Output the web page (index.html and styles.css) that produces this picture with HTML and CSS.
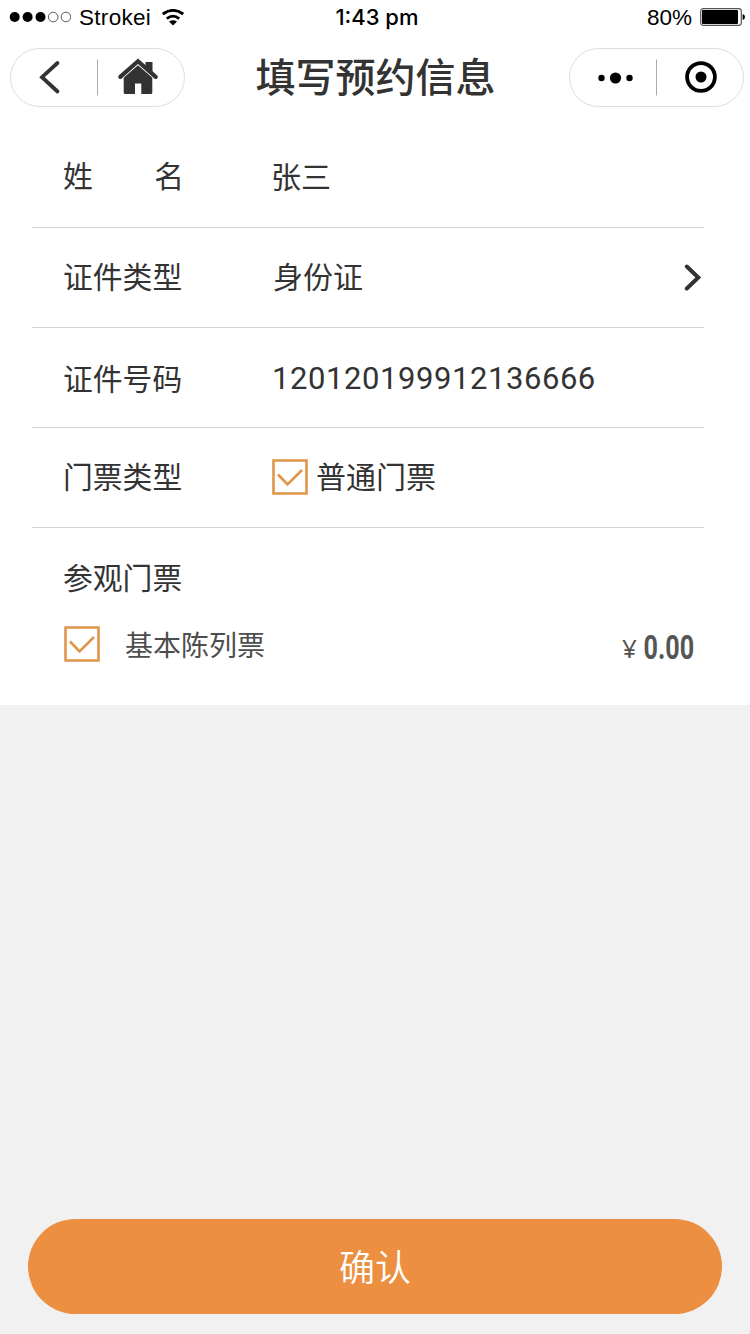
FILE: index.html
```html
<!DOCTYPE html>
<html lang="zh-CN">
<head>
<meta charset="utf-8">
<title>填写预约信息</title>
<link rel="stylesheet" href="styles.css">
</head>
<body>
<div class="screen">
  <header class="status">
    <div class="status-left">
      <svg class="signal" width="62" height="12" viewBox="0 0 62 12">
        <circle cx="5.7" cy="6" r="5"/><circle cx="18.6" cy="6" r="5"/><circle cx="31.500" cy="6" r="5"/>
        <circle class="hollow" cx="44.2" cy="6" r="4.8"/><circle class="hollow" cx="57" cy="6" r="4.8"/>
      </svg>
      <span class="carrier">Strokei</span>
      <svg class="wifi" width="22" height="17" viewBox="0 0 22 17">
        <path class="arc" d="M.8 5Q11-2.300 21.200 5M4.800 9.600Q11 4.600 17.200 9.600"/>
        <path d="M7 12.500Q11 9.800 15 12.500L11 16.400Z"/>
      </svg>
    </div>
    <span class="time">1:43 pm</span>
    <div class="status-right">
      <span class="percent">80%</span>
      <svg class="battery" width="45" height="18" viewBox="0 0 45 18">
        <rect class="case" x=".7" y=".7" width="40.6" height="16.6" rx="2.5"/>
        <rect x="2" y="2" width="36" height="14" rx="1"/>
        <path d="M42.600 6Q45 6.500 45 9T42.600 12Z"/>
      </svg>
    </div>
  </header>

  <nav class="nav">
    <div class="capsule">
      <svg width="173" height="57" viewBox="0 0 173 57">
        <path class="back" d="M46.500 14L31 28.200L46.500 42.500"/>
        <path class="split" d="M86.500 10.500V46.500"/>
        <path class="roof" d="M109.300 27.800L127 12.200L144.700 27.800"/>
        <path class="house" d="M134.500 13h7v10.500l-7-6zM127 16.200L141.300 28.800V43.500Q141.300 45 139.800 45H130.300V34.500H124V45H114.200Q112.700 45 112.700 43.500V28.800Z"/>
      </svg>
    </div>
    <h1 class="title">填写预约信息</h1>
    <div class="capsule">
      <svg width="173" height="57" viewBox="0 0 173 57">
        <circle cx="31.500" cy="29" r="3.200"/><circle cx="45.500" cy="29" r="5.600"/><circle cx="59.500" cy="29" r="3.200"/>
        <path class="split" d="M86.500 10.500V46.500"/>
        <circle class="ring" cx="131" cy="28" r="13.900"/><circle cx="131" cy="28" r="5.500"/>
      </svg>
    </div>
  </nav>

  <main class="form">
    <div class="row"><span class="label spread"><span>姓</span><span>名</span></span><span class="value name">张三</span></div>
    <div class="row"><span class="label">证件类型</span><span class="value">身份证</span>
      <svg class="arrow" width="18" height="28" viewBox="0 0 18 28"><path d="M2.800 2.500L14.300 13.500L2.800 24.500"/></svg>
    </div>
    <div class="row id-row"><span class="label">证件号码</span><span class="value number">120120199912136666</span></div>
    <div class="row"><span class="label ticket-label">门票类型</span>
      <svg class="check ticket-check" width="36" height="36" viewBox="0 0 36 36"><path d="M1.500 1.500H34.500V34.500H1.500ZM6 15.500L15.500 25.500L30 11"/></svg>
      <span class="value ticket">普通门票</span>
    </div>
    <section class="visit">
      <h2 class="label">参观门票</h2>
      <div class="option">
        <svg class="check" width="36" height="36" viewBox="0 0 36 36"><path d="M1.500 1.500H34.500V34.500H1.500ZM6 15.500L15.500 25.500L30 11"/></svg>
        <span class="option-name">基本陈列票</span>
        <svg class="price" width="80" height="50" viewBox="0 0 80 50">
          <text class="yen" x="2" y="39">¥</text>
          <text class="amount" transform="translate(23.500 39.500) scale(.74 1)">0.00</text>
        </svg>
      </div>
    </section>
  </main>

  <footer class="footer"><button class="confirm">确认</button></footer>
</div>
</body>
</html>
```
FILE: styles.css
```css
* { box-sizing: border-box; }
body { margin: 0; font-family: "Liberation Sans", "Noto Sans CJK SC", sans-serif; color: #333; }
svg { display: block; flex: none; }
.screen { width: 750px; height: 1334px; display: flex; flex-direction: column; background: #f1f1f2; }

.status { height: 36px; display: grid; grid-template-columns: 1fr auto 1fr; align-items: center; padding: 0 5px 3px 9px; background: #fff; color: #000; font-size: 22.5px; line-height: 32px; }
.status-left, .status-right { display: flex; align-items: center; }
.status-right { justify-content: flex-end; gap: 8px; }
.carrier { margin-left: 8px; letter-spacing: .3px; padding-top: 2px; }
.wifi { margin-left: 11px; }
.arc { fill: none; stroke: #000; stroke-width: 2.8; }
.hollow { fill: none; stroke: #333; stroke-width: .8; }
.time { font-family: Inter, sans-serif; font-weight: 500; font-size: 22px; }
.percent { padding-top: 1px; }
.case { fill: #fff; stroke: #555; stroke-width: 1.2; }

.nav { height: 91px; display: flex; justify-content: space-between; align-items: flex-start; padding: 12px 6px 0 10px; background: #fff; }
.capsule { width: 175px; height: 59px; border: 1px solid #ddd; border-radius: 30px; }
.split { stroke: #aaa; stroke-width: 1; }
.back { fill: none; stroke: #333; stroke-width: 3.8; stroke-linecap: round; }
.roof { fill: none; stroke: #333; stroke-width: 4.2; stroke-linecap: round; }
.house { fill: #333; }
.ring { fill: none; stroke: #000; stroke-width: 3.8; }
.title { margin: 0; padding-right: 3px; font-size: 40px; line-height: 54px; font-weight: 500; font-family: "Noto Sans CJK SC", sans-serif; }

.form { height: 578px; padding: 0 46px 0 32px; background: #fff; }
.row { height: 100px; display: flex; align-items: center; padding-left: 31px; border-bottom: 1px solid #d5d5d5; font-size: 30px; line-height: 44px; }
.row:first-child { height: 101px; }
.label { width: 210px; margin: 0; flex: none; font-size: 29.8px; line-height: 44px; font-weight: 400; }
.spread { display: flex; justify-content: space-between; padding-right: 89px; }
.name { margin-left: -2px; padding-top: 2px; }
.id-row { padding-top: 3px; }
.id-row .label { padding-top: 2px; }
.number { margin-left: -1px; font-family: Roboto, sans-serif; font-weight: 400; font-size: 31px; letter-spacing: .57px; }
.arrow { margin-left: auto; margin-right: 2px; fill: none; stroke: #333; stroke-width: 4; stroke-linecap: round; }
.check { fill: none; stroke: #e09548; stroke-width: 2.6; }
.ticket-label { width: 209px; }
.ticket-check { margin-bottom: 2px; }
.ticket { margin-left: 8px; }
.visit { padding: 29px 4px 0 31px; }
.option { display: flex; align-items: center; height: 44px; margin-top: 21px; padding-left: 1px; }
.option-name { margin-left: 25px; padding-top: 6px; font-size: 28px; line-height: 40px; color: #4d4d4d; }
.price { margin-left: auto; fill: #555; }
.yen { font-family: "Noto Sans", sans-serif; font-size: 26px; }
.amount { font-family: Roboto, sans-serif; font-size: 34px; font-weight: 700; }

.footer { margin-top: auto; padding: 0 28px 20px; }
.confirm { display: block; width: 100%; height: 95px; border: 0; border-radius: 48px; padding: 0 0 4px; background: #ec8f41; color: #fff; font-family: "Noto Sans CJK SC", sans-serif; font-size: 36px; font-weight: 350; line-height: 52px; }
```
